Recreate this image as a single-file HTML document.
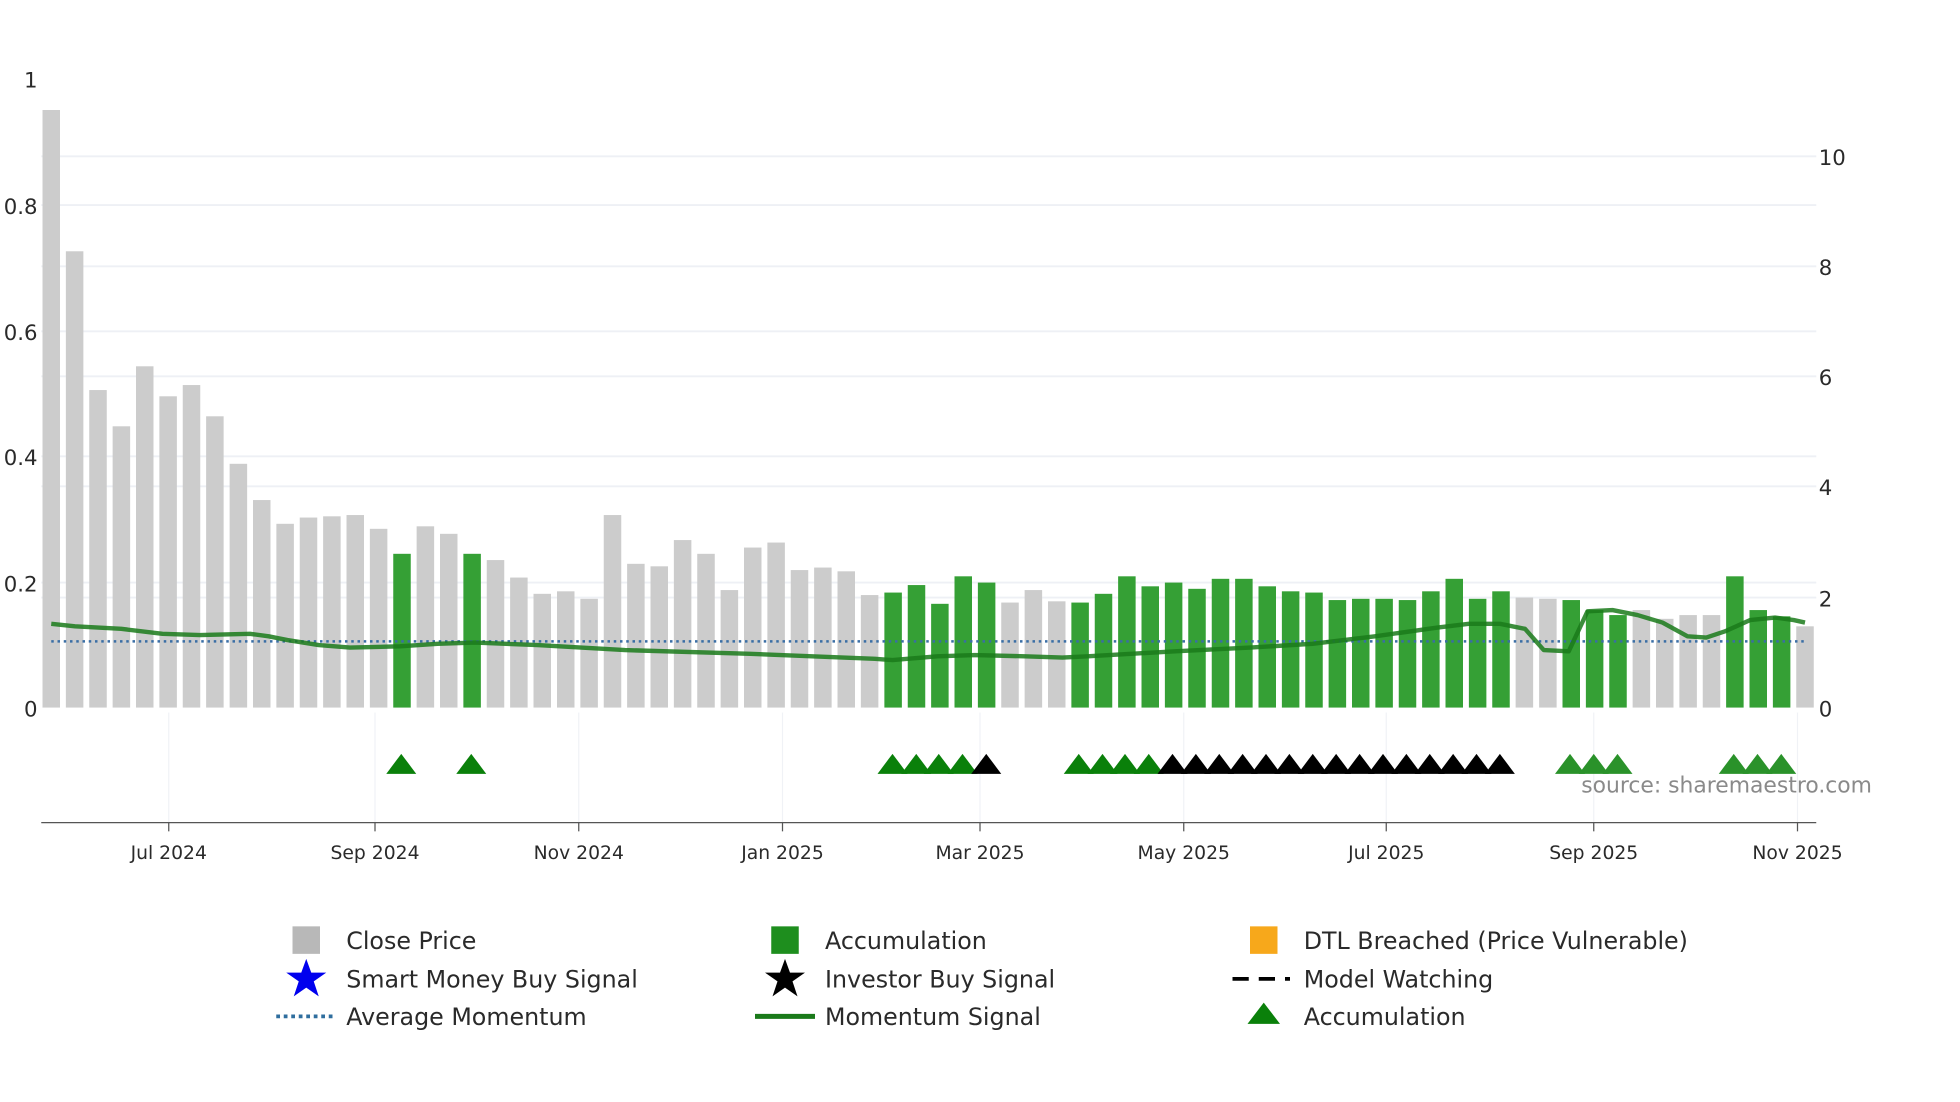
<!DOCTYPE html>
<html><head><meta charset="utf-8"><style>
html,body{margin:0;padding:0;background:#fff;}
svg{display:block;font-family:"DejaVu Sans","Liberation Sans",sans-serif;}
.k{fill:#cccccc}.g{fill:#35a035}
</style></head><body>
<svg width="1960" height="1102" viewBox="0 0 1568 881.5" preserveAspectRatio="none" xmlns="http://www.w3.org/2000/svg" xmlns:xlink="http://www.w3.org/1999/xlink">
<defs>
<polygon id="tg" points="0,603 12,619 -12,619" fill="#0a800a"/>
<polygon id="tl" points="0,603 12,619 -12,619" fill="#2a922a"/>
<polygon id="tb" points="0,603 12,619 -12,619" fill="#000"/>
</defs>
<rect width="1600" height="900" fill="#fff"/>
<g stroke="#eef0f5" stroke-width="1.5">
<line x1="33" x2="1453" y1="125" y2="125"/><line x1="33" x2="1453" y1="164" y2="164"/>
<line x1="33" x2="1453" y1="213" y2="213"/><line x1="33" x2="1453" y1="265" y2="265"/>
<line x1="33" x2="1453" y1="301" y2="301"/><line x1="33" x2="1453" y1="365" y2="365"/>
<line x1="33" x2="1453" y1="389" y2="389"/><line x1="33" x2="1453" y1="466" y2="466"/>
<line x1="33" x2="1453" y1="478" y2="478"/>
</g>
<g stroke="#f0f2f6" stroke-width="1">
<line x1="135" x2="135" y1="570" y2="658"/><line x1="300" x2="300" y1="570" y2="658"/>
<line x1="463" x2="463" y1="570" y2="658"/><line x1="626" x2="626" y1="570" y2="658"/>
<line x1="784" x2="784" y1="570" y2="658"/><line x1="947" x2="947" y1="570" y2="658"/>
<line x1="1109" x2="1109" y1="570" y2="658"/><line x1="1275" x2="1275" y1="570" y2="658"/>
<line x1="1438" x2="1438" y1="570" y2="658"/>
</g>
<g>
<rect class="k" x="34.0" y="88" width="14" height="478"/>
<rect class="k" x="52.7" y="201" width="14" height="365"/>
<rect class="k" x="71.4" y="312" width="14" height="254"/>
<rect class="k" x="90.1" y="341" width="14" height="225"/>
<rect class="k" x="108.8" y="293" width="14" height="273"/>
<rect class="k" x="127.5" y="317" width="14" height="249"/>
<rect class="k" x="146.2" y="308" width="14" height="258"/>
<rect class="k" x="164.9" y="333" width="14" height="233"/>
<rect class="k" x="183.7" y="371" width="14" height="195"/>
<rect class="k" x="202.4" y="400" width="14" height="166"/>
<rect class="k" x="221.1" y="419" width="14" height="147"/>
<rect class="k" x="239.8" y="414" width="14" height="152"/>
<rect class="k" x="258.5" y="413" width="14" height="153"/>
<rect class="k" x="277.2" y="412" width="14" height="154"/>
<rect class="k" x="295.9" y="423" width="14" height="143"/>
<rect class="g" x="314.6" y="443" width="14" height="123"/>
<rect class="k" x="333.3" y="421" width="14" height="145"/>
<rect class="k" x="352.0" y="427" width="14" height="139"/>
<rect class="g" x="370.7" y="443" width="14" height="123"/>
<rect class="k" x="389.4" y="448" width="14" height="118"/>
<rect class="k" x="408.1" y="462" width="14" height="104"/>
<rect class="k" x="426.8" y="475" width="14" height="91"/>
<rect class="k" x="445.6" y="473" width="14" height="93"/>
<rect class="k" x="464.3" y="479" width="14" height="87"/>
<rect class="k" x="483.0" y="412" width="14" height="154"/>
<rect class="k" x="501.7" y="451" width="14" height="115"/>
<rect class="k" x="520.4" y="453" width="14" height="113"/>
<rect class="k" x="539.1" y="432" width="14" height="134"/>
<rect class="k" x="557.8" y="443" width="14" height="123"/>
<rect class="k" x="576.5" y="472" width="14" height="94"/>
<rect class="k" x="595.2" y="438" width="14" height="128"/>
<rect class="k" x="613.9" y="434" width="14" height="132"/>
<rect class="k" x="632.6" y="456" width="14" height="110"/>
<rect class="k" x="651.3" y="454" width="14" height="112"/>
<rect class="k" x="670.0" y="457" width="14" height="109"/>
<rect class="k" x="688.7" y="476" width="14" height="90"/>
<rect class="g" x="707.5" y="474" width="14" height="92"/>
<rect class="g" x="726.2" y="468" width="14" height="98"/>
<rect class="g" x="744.9" y="483" width="14" height="83"/>
<rect class="g" x="763.6" y="461" width="14" height="105"/>
<rect class="g" x="782.3" y="466" width="14" height="100"/>
<rect class="k" x="801.0" y="482" width="14" height="84"/>
<rect class="k" x="819.7" y="472" width="14" height="94"/>
<rect class="k" x="838.4" y="481" width="14" height="85"/>
<rect class="g" x="857.1" y="482" width="14" height="84"/>
<rect class="g" x="875.8" y="475" width="14" height="91"/>
<rect class="g" x="894.5" y="461" width="14" height="105"/>
<rect class="g" x="913.2" y="469" width="14" height="97"/>
<rect class="g" x="931.9" y="466" width="14" height="100"/>
<rect class="g" x="950.6" y="471" width="14" height="95"/>
<rect class="g" x="969.4" y="463" width="14" height="103"/>
<rect class="g" x="988.1" y="463" width="14" height="103"/>
<rect class="g" x="1006.8" y="469" width="14" height="97"/>
<rect class="g" x="1025.5" y="473" width="14" height="93"/>
<rect class="g" x="1044.2" y="474" width="14" height="92"/>
<rect class="g" x="1062.9" y="480" width="14" height="86"/>
<rect class="g" x="1081.6" y="479" width="14" height="87"/>
<rect class="g" x="1100.3" y="479" width="14" height="87"/>
<rect class="g" x="1119.0" y="480" width="14" height="86"/>
<rect class="g" x="1137.7" y="473" width="14" height="93"/>
<rect class="g" x="1156.4" y="463" width="14" height="103"/>
<rect class="g" x="1175.1" y="479" width="14" height="87"/>
<rect class="g" x="1193.8" y="473" width="14" height="93"/>
<rect class="k" x="1212.5" y="478" width="14" height="88"/>
<rect class="k" x="1231.3" y="479" width="14" height="87"/>
<rect class="g" x="1250.0" y="480" width="14" height="86"/>
<rect class="g" x="1268.7" y="488" width="14" height="78"/>
<rect class="g" x="1287.4" y="492" width="14" height="74"/>
<rect class="k" x="1306.1" y="488" width="14" height="78"/>
<rect class="k" x="1324.8" y="495" width="14" height="71"/>
<rect class="k" x="1343.5" y="492" width="14" height="74"/>
<rect class="k" x="1362.2" y="492" width="14" height="74"/>
<rect class="g" x="1380.9" y="461" width="14" height="105"/>
<rect class="g" x="1399.6" y="488" width="14" height="78"/>
<rect class="g" x="1418.3" y="493" width="14" height="73"/>
<rect class="k" x="1437.0" y="501" width="14" height="65"/>
</g>
<line x1="41" x2="1444" y1="513" y2="513" stroke="#3a6ea5" stroke-width="2" stroke-dasharray="2,3"/>
<path d="M41,499 L60,501 L97,503 L130,507 L160,508 L200,507 L215,509 L230,512 L255,516 L280,518 L320,517 L350,515 L380,514 L430,516 L500,520 L600,523 L700,527 L714,528 L750,525 L780,524 L820,525 L850,526 L870,525 L940,521 L1000,518 L1050,515 L1100,509 L1150,502 L1175,499 L1200,499 L1220,503 L1235,520 L1255,521 L1270,489 L1290,488 L1310,492 L1330,498 L1350,509 L1365,510 L1380,505 L1400,496 L1420,494 L1435,496 L1444,498" fill="none" stroke="#1a7a1a" stroke-opacity="0.85" stroke-width="3.5" stroke-linejoin="round"/>
<g>
<use xlink:href="#tg" href="#tg" x="321"/><use xlink:href="#tg" href="#tg" x="377"/>
<use xlink:href="#tg" href="#tg" x="714"/><use xlink:href="#tg" href="#tg" x="733"/>
<use xlink:href="#tg" href="#tg" x="751"/><use xlink:href="#tg" href="#tg" x="770"/>
<use xlink:href="#tb" href="#tb" x="789"/>
<use xlink:href="#tg" href="#tg" x="863"/><use xlink:href="#tg" href="#tg" x="882"/>
<use xlink:href="#tg" href="#tg" x="900"/><use xlink:href="#tg" href="#tg" x="919"/>
<use xlink:href="#tb" href="#tb" x="938"/><use xlink:href="#tb" href="#tb" x="956.7"/>
<use xlink:href="#tb" href="#tb" x="975.4"/><use xlink:href="#tb" href="#tb" x="994.1"/>
<use xlink:href="#tb" href="#tb" x="1012.8"/><use xlink:href="#tb" href="#tb" x="1031.5"/>
<use xlink:href="#tb" href="#tb" x="1050.2"/><use xlink:href="#tb" href="#tb" x="1068.9"/>
<use xlink:href="#tb" href="#tb" x="1087.7"/><use xlink:href="#tb" href="#tb" x="1106.4"/>
<use xlink:href="#tb" href="#tb" x="1125.1"/><use xlink:href="#tb" href="#tb" x="1143.8"/>
<use xlink:href="#tb" href="#tb" x="1162.5"/><use xlink:href="#tb" href="#tb" x="1181.2"/>
<use xlink:href="#tb" href="#tb" x="1199.9"/>
<use xlink:href="#tl" href="#tl" x="1256"/><use xlink:href="#tl" href="#tl" x="1275"/>
<use xlink:href="#tl" href="#tl" x="1294"/><use xlink:href="#tl" href="#tl" x="1387"/>
<use xlink:href="#tl" href="#tl" x="1406"/><use xlink:href="#tl" href="#tl" x="1425"/>
</g>
<line x1="33" x2="1453" y1="658" y2="658" stroke="#555" stroke-width="1"/>
<g stroke="#555" stroke-width="1">
<line x1="135" x2="135" y1="658" y2="665"/><line x1="300" x2="300" y1="658" y2="665"/>
<line x1="463" x2="463" y1="658" y2="665"/><line x1="626" x2="626" y1="658" y2="665"/>
<line x1="784" x2="784" y1="658" y2="665"/><line x1="947" x2="947" y1="658" y2="665"/>
<line x1="1109" x2="1109" y1="658" y2="665"/><line x1="1275" x2="1275" y1="658" y2="665"/>
<line x1="1438" x2="1438" y1="658" y2="665"/>
</g>
<g font-size="17" fill="#2a2a2a">
<text x="30" y="70" text-anchor="end">1</text>
<text x="30" y="171" text-anchor="end">0.8</text>
<text x="30" y="272" text-anchor="end">0.6</text>
<text x="30" y="372" text-anchor="end">0.4</text>
<text x="30" y="473" text-anchor="end">0.2</text>
<text x="30" y="573" text-anchor="end">0</text>
<text x="1455" y="132">10</text>
<text x="1455" y="220">8</text>
<text x="1455" y="308">6</text>
<text x="1455" y="396">4</text>
<text x="1455" y="485">2</text>
<text x="1455" y="573">0</text>
</g>
<g font-size="15" fill="#2a2a2a" text-anchor="middle">
<text x="135" y="687">Jul 2024</text><text x="300" y="687">Sep 2024</text>
<text x="463" y="687">Nov 2024</text><text x="626" y="687">Jan 2025</text>
<text x="784" y="687">Mar 2025</text><text x="947" y="687">May 2025</text>
<text x="1109" y="687">Jul 2025</text><text x="1275" y="687">Sep 2025</text>
<text x="1438" y="687">Nov 2025</text>
</g>
<text x="1265" y="634" font-size="17.5" fill="#8a8a8a">source: sharemaestro.com</text>
<g font-size="19" fill="#2a2a2a">
<rect x="234" y="741" width="22" height="22" fill="#b8b8b8"/>
<text x="277" y="759">Close Price</text>
<polygon points="245,767 249,778 261,778 251,785 255,797 245,790 235,797 239,785 229,778 241,778" fill="#0000ee"/>
<text x="277" y="790">Smart Money Buy Signal</text>
<line x1="221" x2="266" y1="813" y2="813" stroke="#2f6e9e" stroke-width="3" stroke-dasharray="3,3"/>
<text x="277" y="820">Average Momentum</text>
<rect x="617" y="741" width="22" height="22" fill="#1e8e1e"/>
<text x="660" y="759">Accumulation</text>
<polygon points="628,767 632,778 644,778 634,785 638,797 628,790 618,797 622,785 612,778 624,778" fill="#000"/>
<text x="660" y="790">Investor Buy Signal</text>
<line x1="604" x2="652" y1="813" y2="813" stroke="#1a7a1a" stroke-width="4"/>
<text x="660" y="820">Momentum Signal</text>
<rect x="1000" y="741" width="22" height="22" fill="#f7a81b"/>
<text x="1043" y="759">DTL Breached (Price Vulnerable)</text>
<line x1="986" x2="1032" y1="783" y2="783" stroke="#000" stroke-width="3" stroke-dasharray="13,8"/>
<text x="1043" y="790">Model Watching</text>
<polygon points="1011,802 1024,819 998,819" fill="#0a800a"/>
<text x="1043" y="820">Accumulation</text>
</g>
</svg>
</body></html>
